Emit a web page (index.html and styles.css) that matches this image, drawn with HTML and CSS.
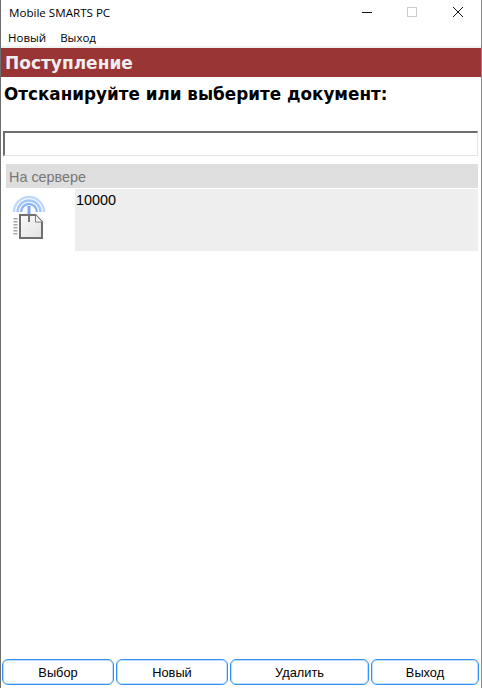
FILE: index.html
```html
<!DOCTYPE html>
<html lang="ru">
<head>
    <meta charset="UTF-8">
    <title>Mobile SMARTS PC</title>
    <link rel="stylesheet" href="styles.css">
</head>
<body>
    <div class="window">
        <div class="titlebar">
            <span class="title">Mobile SMARTS PC</span>
            <div class="controls">
                <svg class="ctl" width="46" height="24" viewBox="0 0 46 24"><path d="M19 12.5h10" stroke="#111" fill="none"/></svg>
                <svg class="ctl" width="46" height="24" viewBox="0 0 46 24"><rect x="18.5" y="7.5" width="9" height="9" stroke="#ccc" fill="none"/></svg>
                <svg class="ctl" width="46" height="24" viewBox="0 0 46 24"><path d="M18 7l10 10M28 7l-10 10" stroke="#111" fill="none"/></svg>
            </div>
        </div>
        <div class="menu">
            <span>Новый</span>
            <span>Выход</span>
        </div>
        <div class="header">Поступление</div>
        <div class="prompt">Отсканируйте или выберите документ:</div>
        <input class="scan" type="text">
        <div class="group">На сервере</div>
        <div class="row">
            <div class="row-icon">
                <svg width="36" height="52" viewBox="0 0 36 52">
                    <defs>
                        <linearGradient id="sheet" x1="0" y1="0" x2="1" y2="1">
                            <stop offset="0" stop-color="#fafafa"/>
                            <stop offset="1" stop-color="#e2e2e2"/>
                        </linearGradient>
                    </defs>
                    <g fill="none" stroke-linecap="butt">
                        <path d="M2 23a15 15 0 0 1 30 0" stroke="#c0d8fc" stroke-width="2.4"/>
                        <path d="M5.5 23a11.5 11.5 0 0 1 23 0" stroke="#a4c6fa" stroke-width="2.4"/>
                        <path d="M9 23a8 8 0 0 1 16 0" stroke="#8cb4f8" stroke-width="2.4"/>
                    </g>
                    <path d="M15.5 17h3v8h-3z" fill="#7fa8f0"/>
                    <path d="M3.5 29v18" stroke="#a5a5a5" stroke-width="4" stroke-dasharray="1.5 1.5" fill="none"/>
                    <path d="M8 26h15.5l6.5 7v16H8z" fill="url(#sheet)" stroke="#6f6f6f" stroke-width="2"/>
                    <path d="M23.5 26v7H30" fill="#fff" stroke="#777"/>
                    <path d="M16 25h2v8h-2z" fill="#777"/>
                </svg>
            </div>
            <div class="row-text">10000</div>
        </div>
        <div class="spacer"></div>
        <div class="buttons">
            <button class="btn btn-select">Выбор</button>
            <button class="btn btn-new">Новый</button>
            <button class="btn btn-delete">Удалить</button>
            <button class="btn btn-exit">Выход</button>
        </div>
    </div>
</body>
</html>
```

FILE: styles.css
```css
html, body {
    margin: 0;
    padding: 0;
    height: 100%;
    background-color: white;
}
.window {
    height: 688px;
    box-sizing: border-box;
    border-left: 1px solid #6e6e6e;
    border-right: 1px solid #8a8a8a;
    display: flex;
    flex-direction: column;
    font-family: "Open Sans", "Noto Sans", sans-serif;
    color: #000;
    overflow: hidden;
}
.titlebar {
    height: 24px;
    flex: none;
    display: flex;
    justify-content: space-between;
    align-items: center;
}
.title {
    font-size: 11.6px;
    margin-left: 8px;
}
.controls {
    display: flex;
}
.ctl {
    display: block;
}
.menu {
    height: 24px;
    flex: none;
    box-sizing: border-box;
    display: flex;
    gap: 14px;
    align-items: center;
    padding: 4px 0 0 7px;
    border-bottom: 2px solid #f0f0f0;
    font-size: 11.5px;
}
.header {
    height: 29px;
    flex: none;
    box-sizing: border-box;
    background-color: #993535;
    color: #eee;
    font-family: "DejaVu Sans", sans-serif;
    font-weight: bold;
    font-size: 17px;
    line-height: 31px;
    padding-left: 4px;
}
.prompt {
    height: 54px;
    flex: none;
    box-sizing: border-box;
    padding-left: 3px;
    padding-top: 5px;
    font-family: "DejaVu Sans", sans-serif;
    font-weight: bold;
    font-size: 16.8px;
    line-height: 24px;
}
.scan {
    display: block;
    flex: none;
    height: 25px;
    margin: 0 3px 0 2px;
    box-sizing: border-box;
    border: 2px solid #e4e4e4;
    border-top-color: #6e6e6e;
    border-left-color: #6e6e6e;
    border-right-width: 1px;
    border-bottom-width: 1px;
    background: white;
    padding: 0;
}
.group {
    margin: 8px 3px 0 5px;
    height: 24px;
    flex: none;
    background-color: #dedede;
    color: #777;
    font-family: "Liberation Sans", Arial, sans-serif;
    font-size: 14.4px;
    line-height: 26px;
    padding-left: 3px;
}
.row {
    margin: 1px 3px 0 5px;
    height: 62px;
    flex: none;
    display: flex;
}
.row-icon {
    width: 69px;
    flex: none;
}
.row-icon svg {
    display: block;
    margin-left: 6px;
}
.row-text {
    flex: 1;
    background-color: #eeeeee;
    font-family: "Liberation Sans", Arial, sans-serif;
    font-size: 14.4px;
    line-height: 22px;
    padding-left: 1px;
}
.spacer {
    flex: 1;
}
.buttons {
    flex: none;
    display: flex;
    gap: 2px;
    padding: 0 1px 3px 1px;
}
.btn {
    height: 26px;
    box-sizing: border-box;
    padding: 0;
    background: white;
    border: 1px solid #2f93f5;
    box-shadow: inset 0 0 0 1px rgba(47, 147, 245, 0.3);
    border-radius: 6px;
    font-family: "Liberation Sans", Arial, sans-serif;
    font-size: 12.8px;
    color: #000;
}
.btn-select { width: 112px; }
.btn-new { width: 112px; }
.btn-delete { width: 139px; }
.btn-exit { width: 108px; }
```
